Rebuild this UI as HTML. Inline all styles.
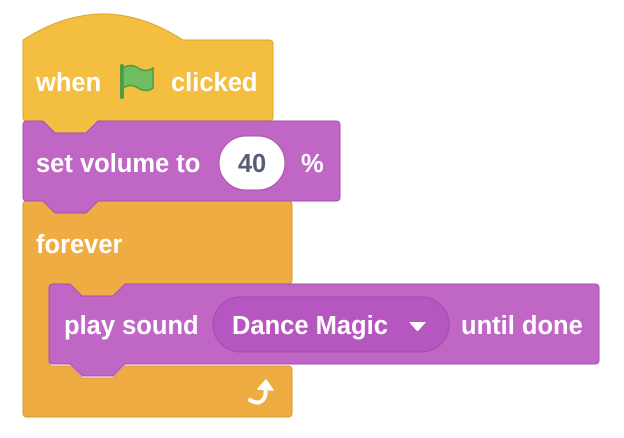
<!DOCTYPE html>
<html><head><style>
html,body{margin:0;padding:0;background:#fff;}
svg{display:block}
text{font-family:"Liberation Sans",Arial,sans-serif;font-weight:bold;font-size:25.5px;fill:#fff}
</style></head><body>
<svg width="624" height="438" viewBox="0 0 624 438">
<path d="M27 201 H43 L55 213 H86 L98 201 H288 Q292 201 292 205 V280 Q292 284 288 284 H125 L113 296 H82 L70 284 H53 Q49 284 49 288 V362 Q49 366 53 366 H70 L82 378 H113 L125 366 H288 Q292 366 292 370 V413 Q292 417 288 417 H27 Q23 417 23 413 V205 Q23 201 27 201 Z" fill="#EFAC42" stroke="#D99A33" stroke-width="1"/>
<path d="M23 40 Q103 -12 183 40 H269 Q273 40 273 44 V117 Q273 121 269 121 H98 L86 133 H55 L43 121 H27 Q23 121 23 117 Z" fill="#F4BE41" stroke="#D9A52E" stroke-width="1"/>
<path d="M27 121 H43 L55 133 H86 L98 121 H336 Q340 121 340 125 V197 Q340 201 336 201 H98 L86 213 H55 L43 201 H27 Q23 201 23 197 V125 Q23 121 27 121 Z" fill="#C066C5" stroke="#A850AE" stroke-width="1"/>
<path d="M53 284 H70 L82 296 H113 L125 284 H595 Q599 284 599 288 V360 Q599 364 595 364 H125 L113 376 H82 L70 364 H53 Q49 364 49 360 V288 Q49 284 53 284 Z" fill="#C066C5" stroke="#A850AE" stroke-width="1"/>
<text x="36" y="91">when</text>
<g transform="translate(119,63)">
<path d="M3 3 V34" stroke="#4F9A45" stroke-width="4" stroke-linecap="round"/>
<path d="M4 5 Q12 0 19 5 Q27 10 34 5 V25 Q27 30 19 25 Q12 20 4 25 Z" fill="#6FBE62" stroke="#4F9A45" stroke-width="1.5"/>
</g>
<text x="171" y="91">clicked</text>
<text x="36" y="172">set volume to</text>
<rect x="219" y="136" width="66" height="54" rx="27" fill="#fff" stroke="#A850AE" stroke-width="1"/>
<text x="252" y="172" text-anchor="middle" style="fill:#575E75">40</text>
<text x="301" y="172">%</text>
<text x="36" y="253">forever</text>
<text x="64" y="334">play sound</text>
<rect x="213" y="297" width="236" height="55" rx="27.5" fill="#B656C0" stroke="#A34AAD" stroke-width="1"/>
<text x="232" y="334">Dance Magic</text>
<path d="M409 322 H426 L419 330 Q417.5 332 416 330 Z" fill="#fff"/>
<text x="461" y="334">until done</text>
<path d="M250 400 Q258 405 263 400 Q267 395 265 386" fill="none" stroke="#fff" stroke-width="4" stroke-linecap="round"/>
<path d="M258 389 L266 380 L273 390 Z" fill="#fff" stroke="#fff" stroke-width="1.5" stroke-linejoin="round"/>
</svg>
</body></html>
